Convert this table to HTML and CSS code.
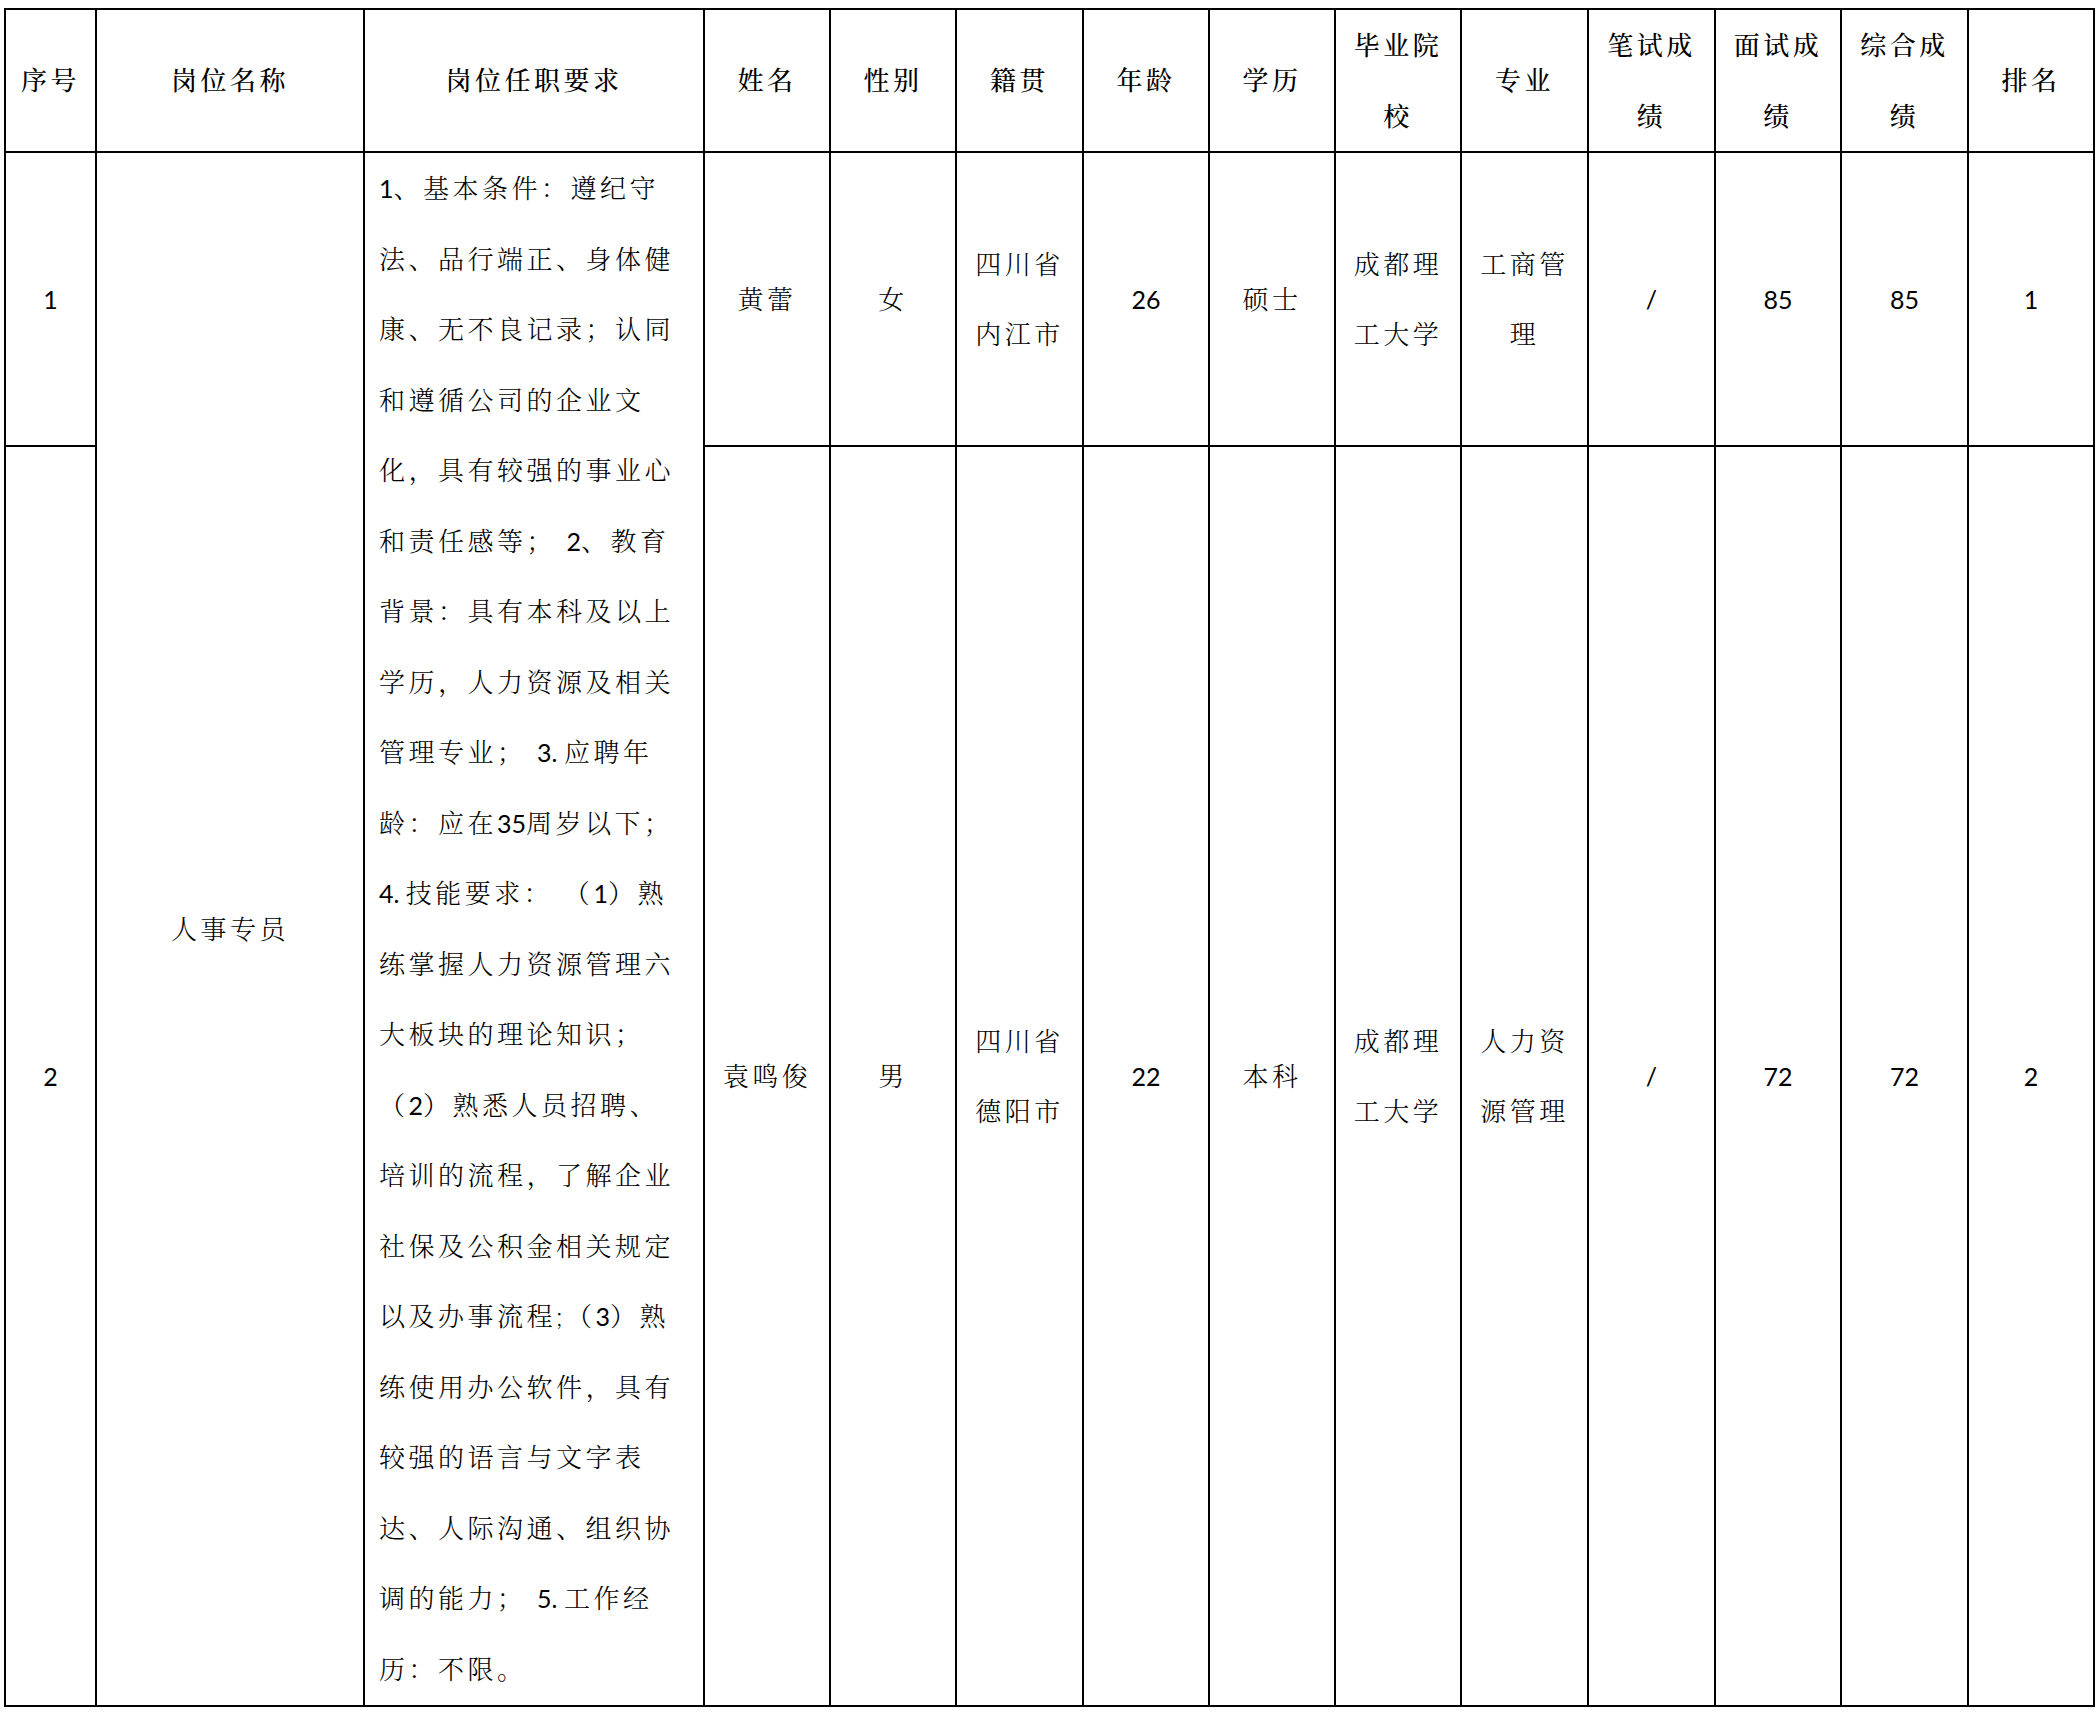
FILE: index.html
```html
<!DOCTYPE html>
<html lang="zh-CN">
<head>
<meta charset="utf-8">
<title>人事专员 面试成绩</title>
<link rel="stylesheet" href="styles.css">
</head>
<body>
<table class="sheet">
  <colgroup>
    <col class="c-no">
    <col class="c-post">
    <col class="c-req">
    <col class="c-126">
    <col class="c-126">
    <col class="c-127">
    <col class="c-126">
    <col class="c-126">
    <col class="c-126">
    <col class="c-127">
    <col class="c-127">
    <col class="c-126">
    <col class="c-127">
    <col class="c-126">
  </colgroup>
  <thead>
    <tr class="r-head">
      <th class="cj">序号</th>
      <th class="cj">岗位名称</th>
      <th class="cj">岗位任职要求</th>
      <th class="cj">姓名</th>
      <th class="cj">性别</th>
      <th class="cj">籍贯</th>
      <th class="cj">年龄</th>
      <th class="cj">学历</th>
      <th class="cj">毕业院<br>校</th>
      <th class="cj">专业</th>
      <th class="cj">笔试成<br>绩</th>
      <th class="cj">面试成<br>绩</th>
      <th class="cj">综合成<br>绩</th>
      <th class="cj">排名</th>
    </tr>
  </thead>
  <tbody>
    <tr class="r-one">
      <td class="num">1</td>
      <td class="cj" rowspan="2">人事专员</td>
      <td class="req" rowspan="2">
        <div class="ln"><span class="n">1</span>、基本条件：遵纪守</div>
        <div class="ln">法、品行端正、身体健</div>
        <div class="ln">康、无不良记录；认同</div>
        <div class="ln">和遵循公司的企业文</div>
        <div class="ln">化，具有较强的事业心</div>
        <div class="ln">和责任感等； <span class="n">2</span>、教育</div>
        <div class="ln">背景：具有本科及以上</div>
        <div class="ln">学历，人力资源及相关</div>
        <div class="ln">管理专业； <span class="n">3. </span>应聘年</div>
        <div class="ln">龄：应在<span class="n">35</span>周岁以下；</div>
        <div class="ln"><span class="n">4. </span>技能要求： （<span class="n">1</span>）熟</div>
        <div class="ln">练掌握人力资源管理六</div>
        <div class="ln">大板块的理论知识；</div>
        <div class="ln">（<span class="n">2</span>）熟悉人员招聘、</div>
        <div class="ln">培训的流程，了解企业</div>
        <div class="ln">社保及公积金相关规定</div>
        <div class="ln">以及办事流程;（<span class="n">3</span>）熟</div>
        <div class="ln">练使用办公软件，具有</div>
        <div class="ln">较强的语言与文字表</div>
        <div class="ln">达、人际沟通、组织协</div>
        <div class="ln">调的能力； <span class="n">5. </span>工作经</div>
        <div class="ln">历：不限。</div>
      </td>
      <td class="cj">黄蕾</td>
      <td class="cj">女</td>
      <td class="cj">四川省<br>内江市</td>
      <td class="num">26</td>
      <td class="cj">硕士</td>
      <td class="cj">成都理<br>工大学</td>
      <td class="cj">工商管<br>理</td>
      <td class="num">/</td>
      <td class="num">85</td>
      <td class="num">85</td>
      <td class="num">1</td>
    </tr>
    <tr class="r-two">
      <td class="num">2</td>
      <td class="cj">袁鸣俊</td>
      <td class="cj">男</td>
      <td class="cj">四川省<br>德阳市</td>
      <td class="num">22</td>
      <td class="cj">本科</td>
      <td class="cj">成都理<br>工大学</td>
      <td class="cj">人力资<br>源管理</td>
      <td class="num">/</td>
      <td class="num">72</td>
      <td class="num">72</td>
      <td class="num">2</td>
    </tr>
  </tbody>
</table>
</body>
</html>
```
FILE: styles.css
```css
html, body {
  margin: 0;
  background: #ffffff;
}

body {
  padding: 8px 0 0 4px;
  color: #000000;
  font-family: "Lato", "Noto Serif CJK SC", "Noto Sans CJK SC", sans-serif;
  font-size: 26px;
}

.sheet {
  border-collapse: collapse;
  table-layout: fixed;
  width: 2091px;
}

.c-no { width: 91px; }
.c-post { width: 268px; }
.c-req { width: 340px; }
.c-126 { width: 126px; }
.c-127 { width: 127px; }

.sheet th,
.sheet td {
  border: 2px solid #000000;
  padding: 0;
  text-align: center;
  vertical-align: middle;
  line-height: 70.5px;
  overflow: hidden;
}

.sheet th {
  font-weight: 500;
}

.sheet td {
  font-weight: 300;
}

.r-head { height: 143px; }
.r-one { height: 294px; }
.r-two { height: 1260px; }

.cj {
  letter-spacing: 3.5px;
  padding-left: 3.5px;
}

.sheet td.num {
  font-size: 25px;
  font-weight: 400;
  letter-spacing: 0;
}

.sheet td.req {
  vertical-align: top;
  text-align: left;
  padding: 0 6px 0 14px;
  letter-spacing: 3.5px;
}

.ln {
  white-space: nowrap;
  height: 70.5px;
}

.n {
  font-size: 25px;
  font-weight: 400;
  letter-spacing: 0;
}
```
